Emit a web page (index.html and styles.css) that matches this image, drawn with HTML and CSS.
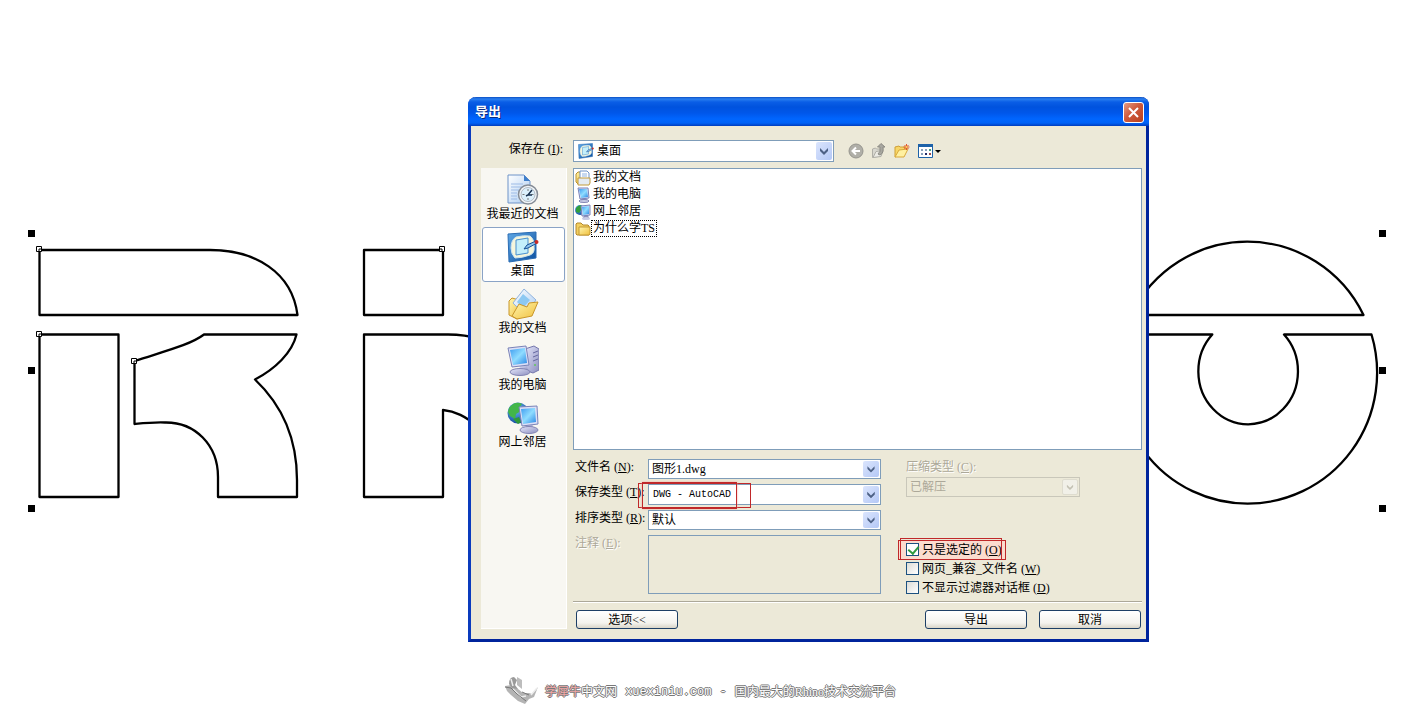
FILE: index.html
```html
<!DOCTYPE html>
<html lang="zh-CN">
  <head>
    <meta charset="UTF-8" />
    <meta name="viewport" content="width=device-width, initial-scale=1.0" />
    <title>导出</title>
    <link rel="stylesheet" href="styles.css">
  </head>
  <body>
    <!-- shared icons -->
    <svg class="defs" width="0" height="0" aria-hidden="true">
      <defs>
        <linearGradient id="screen" x1="0" y1="0" x2="1" y2="1">
          <stop offset="0" stop-color="#3f9cf0" />
          <stop offset="0.5" stop-color="#8fdcff" />
          <stop offset="1" stop-color="#2b86e4" />
        </linearGradient>
        <linearGradient id="yellow" x1="0" y1="0" x2="1" y2="1">
          <stop offset="0" stop-color="#fff6b0" />
          <stop offset="1" stop-color="#f0bf3c" />
        </linearGradient>
        <linearGradient id="paper" x1="0" y1="0" x2="1" y2="1">
          <stop offset="0" stop-color="#ffffff" />
          <stop offset="1" stop-color="#a9cbf2" />
        </linearGradient>
        <linearGradient id="metal" x1="0" y1="0" x2="1" y2="1">
          <stop offset="0" stop-color="#e4e6fa" />
          <stop offset="1" stop-color="#8d8fc0" />
        </linearGradient>
        <linearGradient id="deep" x1="0" y1="0" x2="1" y2="1">
          <stop offset="0" stop-color="#5fa8e6" />
          <stop offset="1" stop-color="#0c4f9e" />
        </linearGradient>
        <radialGradient id="globe" cx="0.4" cy="0.3" r="0.8">
          <stop offset="0" stop-color="#6fc0f8" />
          <stop offset="1" stop-color="#0b3f96" />
        </radialGradient>
      </defs>
      <symbol id="recent" viewBox="0 0 32 32">
        <path d="M1 1h16l6 6v22H1z" fill="url(#paper)" stroke="#6f93c8" />
        <path d="M17 1v6h6z" fill="#3f7fcb" />
        <path d="M4 10h12M4 13h12M4 16h8M4 19h6M4 22h6M4 25h6" stroke="#9dbbe6" />
        <circle cx="21" cy="20.500" r="9.500" fill="#f2f5f8" stroke="#858c96" stroke-width="1.500" />
        <circle cx="21" cy="20.500" r="7" fill="#dcf0fc" stroke="#b4bcc6" />
        <path d="M21 15v2M21 24v2M15.500 20.500h2M24.500 20.500h2" stroke="#777" />
        <path d="M19 22l2-1 4-5M21 21h4" stroke="#17304f" stroke-width="1.500" fill="none" />
      </symbol>
      <symbol id="desktop" viewBox="0 0 32 32">
        <path d="M1 3l28-2v26l-27 4z" fill="url(#deep)" stroke="#2a6cb4" />
        <path d="M9 6q8-2 14-1 5 4 4 11 1 6-4 8-8 3-15 3-4-4-4-10 0-8 5-11z" fill="#f6f6dc" stroke="#cfe4ee" />
        <path d="M9 9l12-2v15l-12 2z" fill="#c4effb" stroke="#4a90cf" />
        <path d="M17 18l3-4 9-4 1 2-9 5z" fill="#8cc4ee" stroke="#174f94" />
        <circle cx="29.500" cy="11" r="2" fill="#cb2c25" />
      </symbol>
      <symbol id="documents" viewBox="0 0 32 32">
        <path d="M2 13l3-3 7 2 2 17-4 2-8-4z" fill="url(#yellow)" stroke="#c9962a" />
        <path d="M17 1l12 11-11 15-12-12z" fill="url(#paper)" stroke="#8fb3de" />
        <path d="M16 6l7 6-7 8-6-6z" fill="#8cc8f2" />
        <path d="M5 28l7-12 8 3 2-4 9-1-6 14-15 3z" fill="url(#yellow)" stroke="#c9962a" />
      </symbol>
      <symbol id="computer" viewBox="0 0 32 32">
        <path d="M18 4l9-3 5 3v21l-6 3-8-3z" fill="url(#metal)" stroke="#7577ac" />
        <path d="M26 8l5-2M26 12l5-2M26 16l5-2" stroke="#6668a0" />
        <circle cx="28" cy="20" r="1" fill="#62c75b" />
        <path d="M13 20h7l1 6h-9z" fill="url(#metal)" />
        <ellipse cx="13" cy="27" rx="10" ry="3.500" fill="url(#metal)" stroke="#8385b4" />
        <path d="M1 3l18-2 3 19-17 2z" fill="#dcdff6" stroke="#7a83b8" />
        <path d="M3 5l15-2 2 15-14 2z" fill="url(#screen)" />
      </symbol>
      <symbol id="network" viewBox="0 0 32 32">
        <circle cx="11" cy="11" r="10.500" fill="url(#globe)" />
        <path d="M2 6q6-8 13-4l-3 4 2 3-5 3-1 5-5-3-2-4z" fill="#43b649" />
        <path d="M6 17l6-2 2 5-3 2z" fill="#2f9a3a" />
        <path d="M19 22h6l2 5h-9z" fill="url(#metal)" />
        <ellipse cx="22" cy="28" rx="9" ry="3.500" fill="url(#metal)" stroke="#8385b4" />
        <path d="M12 5l18-1 1 18-16 2z" fill="#dcdff6" stroke="#7a83b8" />
        <path d="M14 7l14-1 1 14-13 2z" fill="url(#screen)" />
      </symbol>
      <symbol id="docfolder" viewBox="0 0 16 16">
        <path d="M1 4l2-2h3v12H3l-2-2z" fill="url(#yellow)" stroke="#b8902f" />
        <path d="M5 1h7l2 2v9H5z" fill="#fff" stroke="#6f93c8" />
        <path d="M7 4h5M7 6h5" stroke="#8fb3e2" />
        <path d="M3 8h12v5l-1 2H3z" fill="#e4ebf2" stroke="#c29a38" />
      </symbol>
      <symbol id="monitor" viewBox="0 0 16 16">
        <path d="M7 11h4l1 2H6z" fill="#8d90bc" />
        <ellipse cx="9" cy="14" rx="5" ry="1.500" fill="#c9cce6" stroke="#8385b4" />
        <path d="M3 1h10l1 10-9 1z" fill="#dcdff6" stroke="#7a83b8" />
        <path d="M4 2h8l1 8-7 1z" fill="url(#screen)" />
      </symbol>
      <symbol id="netmonitor" viewBox="0 0 16 16">
        <circle cx="5" cy="6" r="5" fill="url(#globe)" />
        <path d="M1 4q3-4 6-2L6 6 4 9 1 8z" fill="#2f9e3c" />
        <path d="M9 11h4l1 3H8z" fill="#8d90bc" />
        <ellipse cx="11" cy="14.500" rx="4" ry="1.500" fill="#c9cce6" />
        <path d="M6 2l9-1v10l-8 1z" fill="#dcdff6" stroke="#7a83b8" />
        <path d="M7 3l7-1v8l-6 1z" fill="url(#screen)" />
      </symbol>
      <symbol id="folder" viewBox="0 0 16 16">
        <path d="M1 3l1-1h4l2 2h5l1 1v9H2l-1-1z" fill="#f2cf61" stroke="#b3882a" />
        <path d="M4 6h11v7l-1 1H4z" fill="url(#yellow)" stroke="#c59a32" />
      </symbol>
      <symbol id="arrow" viewBox="0 0 16 18">
        <path d="M4 6l4 4 4-4v3l-4 4-4-4z" fill="currentColor" />
      </symbol>
    </svg>

    <main class="desk">
      <!-- drawing -->
      <svg class="drawing" viewBox="0 0 1401 711" aria-hidden="true">
        <g class="outline">
          <path d="M39.500 250H210C255 250 292 272 297.500 315H39.500Z" />
          <path d="M39.500 334.500H118.500V497H39.500Z" />
          <path d="M134.500 361C165 351 190 345 204 334.500H296.500C292 353 275 369 255 379.500C283 406 297 440 297 480V497H218V477C218 445 195 422 165 422.500C155 422 145 423 134.500 424Z" />
          <path d="M364 250H443V315H364Z" />
          <path d="M480 339C470 336 460 334.500 448 334.500H364V497H443V410C455 411 465 416 480 428" />
          <path d="M1131 315A129.500 131 0 0 1 1363.500 315Z" />
          <path d="M1123.700 334.500H1212.300A49.800 53 0 1 0 1284 334.500H1371.500A129.500 131 0 1 1 1123.700 334.500Z" />
        </g>
        <g class="handle">
          <path d="M28 230h7v7h-7zM28 367h7v7h-7zM28 505h7v7h-7z" />
          <path d="M1379 230h7v7h-7zM1379 367h7v7h-7zM1379 505h7v7h-7z" />
        </g>
        <g class="node">
          <path d="M36.500 246.500h5v5h-5zM36.500 331.500h5v5h-5zM131.500 358.500h5v5h-5zM439.500 246.500h5v5h-5z" />
          <path d="M39 251v-2h2M39 336v-2h2M134 363v-2h2M440 249h2v2" />
        </g>
      </svg>

      <!-- dialog -->
      <section class="dialog">
        <header class="title">
          <h1>导出</h1>
          <button class="close" type="button" aria-label="关闭">
            <svg width="11" height="11" viewBox="0 0 11 11"><path d="M1 1l9 9M10 1l-9 9" stroke="#fff" stroke-width="2" /></svg>
          </button>
        </header>
        <form class="body">
          <label class="lookin-label" for="lookin">保存在<span class="key">(<u>I</u>):</span></label>
          <div class="lookin">
            <div class="combo combo-lookin">
              <svg class="small-icon" width="16" height="16"><use href="#desktop" /></svg>
              <select id="lookin"><option>桌面</option></select>
              <svg class="arrow"><use href="#arrow" /></svg>
            </div>
            <div class="tools">
              <button type="button" aria-label="后退">
                <svg width="16" height="16" viewBox="0 0 16 16"><circle cx="8" cy="8" r="7" fill="#b0afa8" stroke="#96958e" /><path d="M12 8H5M8 4.500L4.500 8 8 11.500" fill="none" stroke="#fff" stroke-width="2" /></svg>
              </button>
              <button type="button" aria-label="向上">
                <svg width="16" height="16" viewBox="0 0 16 16"><path d="M1.500 14.500V6l3-1 1 1h4v7z" fill="#d9d8d0" stroke="#b0afa7" /><path d="M2 14.500l3-6 7-1-2 6z" fill="#ecebe5" stroke="#b0afa7" /><path d="M7 11q3-2 2-7H6.500L10 .5 14 4h-2q1 6-3 8z" fill="#a8a7a0" stroke="#8b8a83" /></svg>
              </button>
              <button type="button" aria-label="新建文件夹">
                <svg width="16" height="16" viewBox="0 0 16 16"><path d="M1 14V4l4-1 1 1h5v6z" fill="#f7d667" stroke="#cf9f35" /><path d="M1 14l4-7 9-1-4 8z" fill="#fff0a0" stroke="#d9a93b" /><path d="M12.500 1v6M9.500 4h6M10.500 2l4 4M14.500 2l-4 4" stroke="#e2582b" /><circle cx="12.500" cy="4" r="1" fill="#ffd65a" /></svg>
              </button>
              <button type="button" aria-label="查看">
                <svg width="24" height="16" viewBox="0 0 24 16"><path d="M1.500 1.500h14v13h-14z" fill="#fff" stroke="#1d62a8" /><path d="M1 1h15v3H1z" fill="#1d62a8" /><path d="M4 6h2v2H4zM8 6h2v2H8zM4 10h2v2H4z" fill="#8aa0ba" /><path d="M12 6h2v2h-2z" fill="#48a080" /><path d="M8 10h2v2H8z" fill="#222b66" /><path d="M12 10h2v2h-2z" fill="#9a4c4c" /><path d="M18 7h6l-3 3z" fill="#000" /></svg>
              </button>
            </div>
          </div>

          <nav class="places">
            <button type="button"><svg><use href="#recent" /></svg>我最近的文档</button>
            <button type="button" class="active"><svg><use href="#desktop" /></svg>桌面</button>
            <button type="button"><svg><use href="#documents" /></svg>我的文档</button>
            <button type="button"><svg><use href="#computer" /></svg>我的电脑</button>
            <button type="button"><svg><use href="#network" /></svg>网上邻居</button>
          </nav>

          <div class="main">
            <ul class="files">
              <li><svg class="small-icon" width="16" height="16"><use href="#docfolder" /></svg><span>我的文档</span></li>
              <li><svg class="small-icon" width="16" height="16"><use href="#monitor" /></svg><span>我的电脑</span></li>
              <li><svg class="small-icon" width="16" height="16"><use href="#netmonitor" /></svg><span>网上邻居</span></li>
              <li><svg class="small-icon" width="16" height="16"><use href="#folder" /></svg><span class="focus">为什么学TS</span></li>
            </ul>

            <div class="options">
              <div class="fields">
                <label for="filename">文件名<span class="key">(<u>N</u>):</span></label>
                <div class="combo">
                  <input id="filename" type="text" value="图形1.dwg">
                  <svg class="arrow"><use href="#arrow" /></svg>
                </div>
                <label for="filetype">保存类型<span class="key">(<u>T</u>):</span></label>
                <div class="combo">
                  <select id="filetype" class="latin"><option>DWG - AutoCAD</option></select>
                  <svg class="arrow"><use href="#arrow" /></svg>
                  <i class="mark mark-type-wide"></i>
                  <i class="mark mark-type"></i>
                </div>
                <label for="sort">排序类型<span class="key">(<u>R</u>):</span></label>
                <div class="combo">
                  <select id="sort"><option>默认</option></select>
                  <svg class="arrow"><use href="#arrow" /></svg>
                </div>
                <label for="notes" class="off">注释<span class="key">(<u>E</u>):</span></label>
                <textarea id="notes" disabled></textarea>
              </div>

              <div class="extra">
                <label for="compress" class="off">压缩类型<span class="key">(<u>C</u>):</span></label>
                <div class="combo combo-off">
                  <select id="compress" disabled><option>已解压</option></select>
                  <svg class="arrow"><use href="#arrow" /></svg>
                </div>
                <div class="checks">
                  <label class="check">
                    <input type="checkbox" checked>只是选定的<span class="key">(<u>O</u>)</span>
                    <i class="mark mark-check-wide"></i>
                    <i class="mark mark-check"></i>
                  </label>
                  <label class="check"><input type="checkbox">网页_兼容_文件名<span class="key">(<u>W</u>)</span></label>
                  <label class="check"><input type="checkbox">不显示过滤器对话框<span class="key">(<u>D</u>)</span></label>
                </div>
              </div>
            </div>

            <div class="buttons">
              <button type="button">选项&lt;&lt;</button>
              <button type="button" class="push">导出</button>
              <button type="button">取消</button>
            </div>
          </div>
        </form>
      </section>

      <!-- watermark -->
      <footer class="watermark">
        <svg width="34" height="28" viewBox="0 0 34 28">
          <path d="M0 10l6-1 7 4 5 4 6 0 3 1 6-7-4 10-5 2-4 5-7-3-7-6-4-4z" fill="#b4b4b4" />
          <path d="M4 8q0-7 5-7l3 3-2 5 3 4-6-1z" fill="#9a9a9a" />
          <path d="M12 1l5 3v9l-5-4z" fill="#bdbdbd" />
          <path d="M8 13l8 8 5-1M6 3l2 7M26 19l6-7" fill="none" stroke="#ececec" stroke-width="1.500" />
          <path d="M0 11l6 1 6 6 9 7M17 16l7 3" stroke="#777" fill="none" />
        </svg>
        <p>
          <span><b>学犀牛</b>中文网</span>
          <span class="url">xuexiniu.com</span>
          <span class="url">-</span>
          <span>国内最大的Rhino技术交流平台</span>
        </p>
      </footer>
    </main>
  </body>
</html>
```

FILE: styles.css
```css
* {
  box-sizing: border-box;
  margin: 0;
  padding: 0;
}
body {
  background-color: #fff;
  color: #000;
  font: 12px/16px "Liberation Serif", "Noto Sans CJK SC", serif;
}
button,
input,
select,
textarea {
  font: inherit;
  color: inherit;
}
.defs {
  position: absolute;
}
.latin,
.url {
  font-family: "Liberation Mono", "Noto Sans CJK SC", monospace;
}
.latin {
  font-size: 10px;
}
.key {
  margin-left: 3px;
}
.desk {
  position: relative;
  display: flex;
  flex-direction: column;
  justify-content: flex-end;
  min-height: 100vh;
  overflow: hidden;
}

/* drawing */
.drawing {
  position: absolute;
  top: 0;
  left: 0;
  width: 100%;
}
.outline {
  fill: none;
  stroke: #000;
  stroke-width: 2.3px;
  stroke-linejoin: round;
}
.node {
  fill: #fff;
  stroke: #000;
}

/* dialog */
.dialog {
  position: absolute;
  top: 97px;
  left: 468px;
  width: 681px;
  border: 3px solid #0a3bbd;
  border-top: 0;
  border-right-color: #00249c;
  border-bottom-color: #00249c;
  border-radius: 8px 8px 0 0;
  background-color: #ece9d8;
}
.title {
  display: flex;
  align-items: center;
  justify-content: space-between;
  height: 29px;
  margin: 0 -3px;
  padding: 1px 5px 0 7px;
  border-radius: 8px 8px 0 0;
  background: linear-gradient(#0b4fc4 0, #2a7ff0 2px, #0a5ee6 5px, #0052de 10px, #0057ea 16px, #0066ff 22px, #0062f6 26px, #003dbd 29px);
}
.title h1 {
  font-size: 13px;
  color: #fff;
  text-shadow: 1px 1px #0a2a80;
}
.close {
  display: flex;
  align-items: center;
  justify-content: center;
  width: 21px;
  height: 21px;
  border: 1px solid #fff;
  border-radius: 3px;
  background: linear-gradient(135deg, #e39a84, #cf5a3c 45%, #b8401e);
}
.body {
  display: grid;
  grid-template-columns: 86px 1fr;
  gap: 6px;
  padding: 14px 4px 10px 10px;
}
.lookin-label {
  padding: 1px 4px 0 0;
  text-align: right;
}
.lookin {
  display: flex;
  align-items: center;
  gap: 14px;
}
.tools {
  display: flex;
  gap: 7px;
}
.tools button {
  border: 0;
  background: none;
}
.tools svg {
  display: block;
}
.small-icon {
  flex: none;
}

/* combo boxes */
.combo {
  position: relative;
  display: flex;
  align-items: center;
  border: 1px solid #7f9db9;
  background-color: #fff;
}
.combo select,
.combo input {
  flex: 1;
  min-width: 0;
  height: 18px;
  padding-left: 3px;
  border: 0;
  background: none;
  appearance: none;
  line-height: 18px;
}
.combo .latin {
  padding-left: 4px;
}
.combo-lookin {
  width: 261px;
  height: 22px;
  padding-left: 4px;
}
.arrow {
  flex: none;
  align-self: stretch;
  width: 16px;
  height: auto;
  margin: 1px;
  border-radius: 2px;
  background: linear-gradient(135deg, #dbe5fd, #b4c8f6);
  color: #4d6185;
  pointer-events: none;
}

/* places bar */
.places {
  display: flex;
  flex-direction: column;
  gap: 2px;
  padding: 2px 1px;
  border: 1px solid #fff;
  border-width: 0 1px 1px 0;
  background-color: #f8f7f2;
}
.places button {
  display: flex;
  flex-direction: column;
  align-items: center;
  height: 55px;
  padding: 3px 2px 0 0;
  border: 1px solid transparent;
  border-radius: 3px;
  background: none;
  white-space: nowrap;
}
.places svg {
  flex: none;
  width: 32px;
  height: 32px;
}
.places .active {
  border-color: #8aa3c6;
  background-color: #fff;
}

/* file list */
.files {
  height: 282px;
  padding: 0 1px;
  border: 1px solid #7f9db9;
  background-color: #fff;
  list-style: none;
}
.files li {
  display: flex;
  align-items: center;
  height: 17px;
}
.files li > span {
  padding: 0 1px;
  border: 1px dotted transparent;
  line-height: 15px;
}
.files li > .focus {
  border-color: #000;
}

/* fields */
.options {
  display: flex;
  gap: 25px;
  padding: 9px 0 7px 2px;
  border-bottom: 1px solid #aca899;
  box-shadow: 0 1px #fff;
}
.fields {
  display: grid;
  grid-template-columns: 73px 233px;
  grid-template-rows: 20px 21px 20px 59px;
  row-gap: 5px;
}
.fields label {
  white-space: nowrap;
}
.fields textarea {
  border: 1px solid #7f9db9;
  background: none;
  resize: none;
}
.off {
  color: #aca899;
  text-shadow: 1px 1px #fff;
}
.extra {
  display: flex;
  flex-direction: column;
}
.extra > label {
  height: 18px;
}
.combo-off {
  width: 174px;
  height: 20px;
  border-color: #c9c7ba;
  background: none;
}
.combo-off select {
  color: #aca899;
  opacity: 1;
}
.combo-off .arrow {
  border: 1px solid #dedccf;
  background: #f1f0e8;
  color: #c3c1b3;
}
.checks {
  display: flex;
  flex-direction: column;
  gap: 6px;
  margin-top: auto;
}
.check {
  position: relative;
  z-index: 0;
  display: flex;
  align-items: center;
  height: 13px;
}
.check input {
  width: 13px;
  height: 13px;
  margin-right: 3px;
  border: 1px solid #1c5180;
  background: linear-gradient(135deg, #dcdcd7, #fff);
  appearance: none;
}
.check input:checked {
  background: #fff;
}
.check input:checked::before {
  content: "";
  display: block;
  width: 5px;
  height: 8px;
  margin: 0 0 0 3px;
  border: solid #2f9a3f;
  border-width: 0 2px 2px 0;
  transform: rotate(40deg);
}

/* red marks */
.mark {
  position: absolute;
  border: 1px solid #c0282a;
  pointer-events: none;
}
.mark-type-wide {
  top: -2px;
  left: -11px;
  width: 113px;
  height: 25px;
}
.mark-type {
  top: -3px;
  left: -7px;
  width: 95px;
  height: 27px;
  box-shadow: 0 0 2px #f3a9a0;
}
.mark-check-wide {
  z-index: -1;
  top: -3px;
  left: -8px;
  width: 108px;
  height: 20px;
  background-color: #fbdccf;
}
.mark-check {
  top: -5px;
  left: -6px;
  width: 102px;
  height: 22px;
}

/* buttons */
.buttons {
  display: flex;
  gap: 12px;
  padding: 8px 1px 0 3px;
}
.buttons button {
  width: 102px;
  height: 19px;
  border: 1px solid #1d3f66;
  border-radius: 3px;
  background: linear-gradient(#fff, #f4f3ee 70%, #d9d5c8);
  line-height: 16px;
}
.push {
  margin-left: auto;
}

/* watermark */
.watermark {
  display: flex;
  align-items: center;
  justify-content: center;
  gap: 6px;
  padding-bottom: 7px;
  color: #fff;
  text-shadow: 1px 0 #777, -1px 0 #777, 0 1px #777, 0 -1px #777;
}
.watermark p {
  display: flex;
  gap: 8px;
  padding-top: 4px;
}
.watermark b {
  font-weight: 400;
  color: #f0a8a8;
}
```
